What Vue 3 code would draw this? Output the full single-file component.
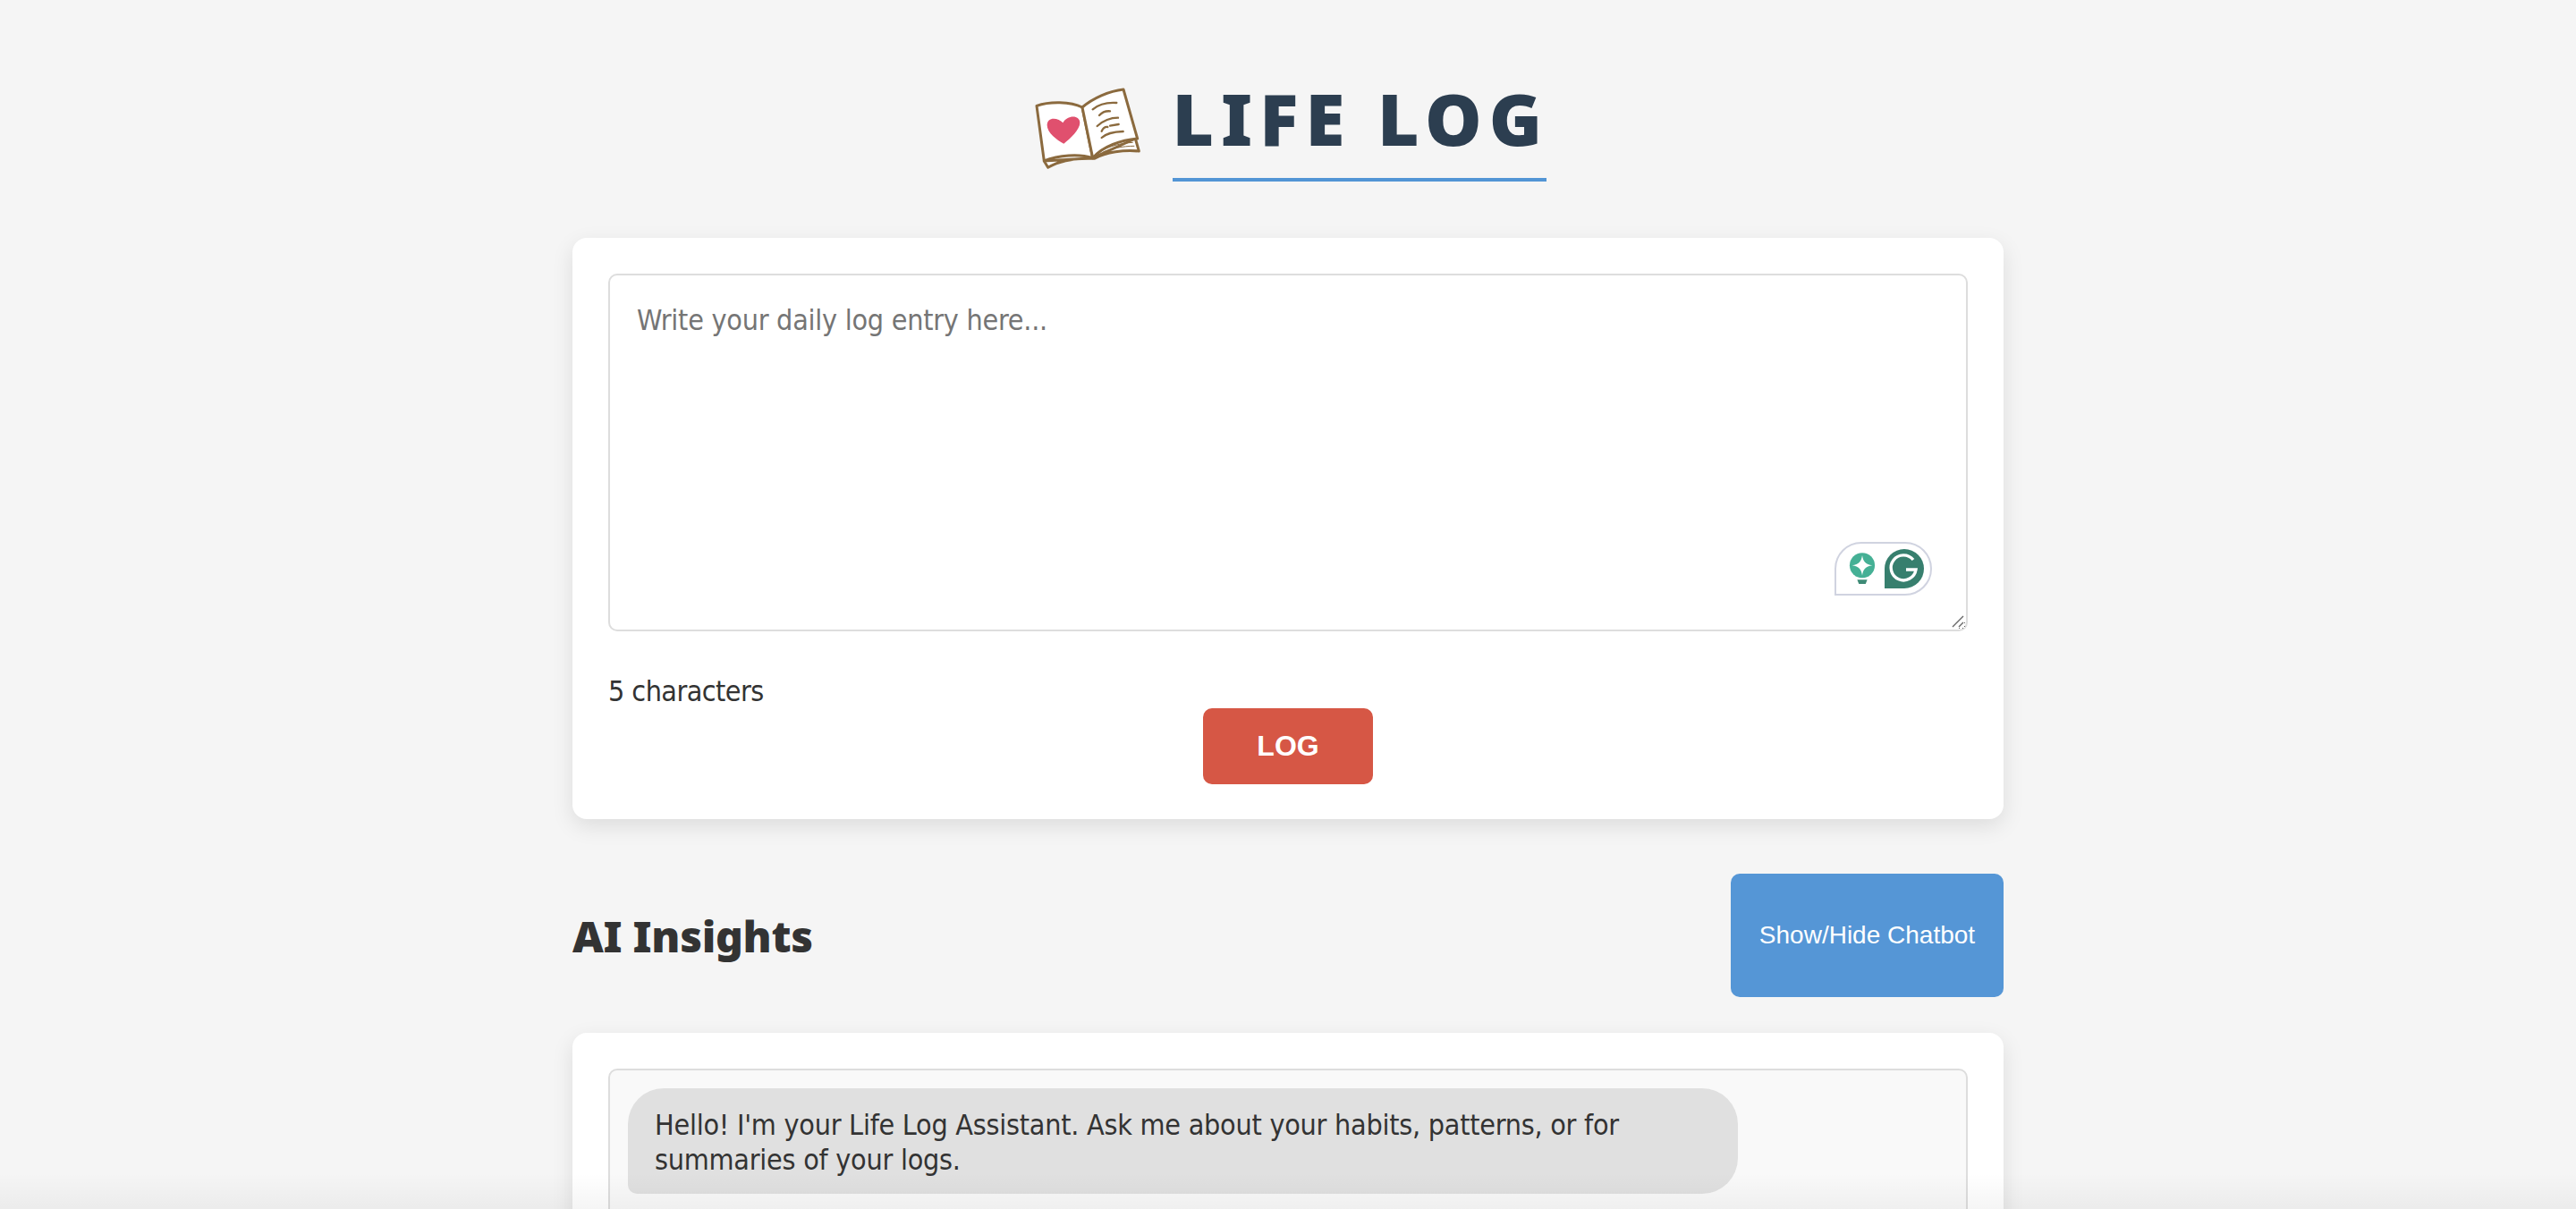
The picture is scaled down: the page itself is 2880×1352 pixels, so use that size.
<script setup>
const placeholder = 'Write your daily log entry here...'
</script>

<template>
  <div class="page">
    <header class="head">
      <svg class="book" viewBox="0 0 540 360" aria-hidden="true">
        <path class="pg" d="M112 300 L125 322 C170 295 230 290 280 292 C320 270 380 262 430 267 L418 225 L275 290 Z"/>
        <path class="thin" d="M300 268 C330 250 370 240 410 238 M310 270 C340 258 375 250 415 250"/>
        <path class="pg" d="M87 115 C130 100 200 100 240 120 L275 290 C230 275 160 280 112 300 Z"/>
        <path class="pg" d="M240 120 C275 90 330 65 378 60 L425 225 C370 230 310 250 275 290 Z"/>
        <path class="ln" d="M275 127 C295 110 325 103 355 105 M297 147 C305 138 320 132 333 133 M290 183 C310 165 335 155 360 155 M305 200 C310 190 318 185 325 186 M333 182 L362 177 M305 222 C320 208 345 202 377 201"/>
        <path class="heart" d="M175 172 C160 155 122 150 122 180 C122 205 155 230 178 242 C200 225 232 195 232 172 C232 145 190 145 175 172 Z"/>
      </svg>
      <h1 class="title">LIFE LOG</h1>
    </header>

    <main class="wrap">
      <section class="card entry">
        <div class="field">
          <textarea class="input" :placeholder="placeholder"></textarea>
          <div class="gram">
            <svg class="bulb" viewBox="0 0 32 38" aria-hidden="true">
              <circle cx="16" cy="15" r="15" fill="#45b095"/>
              <path d="M8 24 L24 24 L24 28 L8 28 Z" fill="#45b095"/>
              <path d="M10 32 L22 32 L20 37 L12 37 Z" fill="#3d8a76"/>
              <path d="M16 3 C17 10 20 14 28 15 C20 16 17 20 16 27 C15 20 12 16 4 15 C12 14 15 10 16 3 Z" fill="#fff"/>
            </svg>
            <svg class="g" viewBox="0 0 44 44" aria-hidden="true">
              <path d="M22 0 A22 22 0 0 1 22 44 L0 44 L0 22 A22 22 0 0 1 22 0 Z" fill="#377f6e"/>
              <path d="M32 12 A14 14 0 1 0 35 23 L24 23" fill="none" stroke="#fff" stroke-width="3.4"/>
            </svg>
          </div>
          <svg class="grip" viewBox="0 0 14 14" aria-hidden="true">
            <path d="M1 13 L13 1 M8 13 L13 8" stroke="#666" stroke-width="1.4" fill="none"/>
          </svg>
        </div>
        <div class="count">5 characters</div>
        <div class="actions"><button class="log" type="button">LOG</button></div>
      </section>

      <div class="bar">
        <h2 class="sub">AI Insights</h2>
        <button class="toggle" type="button">Show/Hide Chatbot</button>
      </div>

      <section class="card chat">
        <div class="messages">
          <div class="bubble">Hello! I'm your Life Log Assistant. Ask me about your habits, patterns, or for summaries of your logs.</div>
        </div>
      </section>
    </main>
    <div class="fade"></div>
  </div>
</template>

<style>
html, body { margin: 0; height: 100%; overflow: hidden; background: #f5f5f5; }
</style>

<style scoped>
.page {
  position: relative;
  height: 1352px;
  overflow: hidden;
  background: #f5f5f5;
  color: #333;
  font-family: "DejaVu Sans Condensed", "DejaVu Sans", sans-serif;
  font-stretch: condensed;
  font-size: 32px;
  letter-spacing: -0.25px;
}
.head {
  display: flex;
  justify-content: center;
  align-items: flex-start;
  gap: 24px;
  padding-top: 80px;
  height: 186px;
  box-sizing: border-box;
}
.book { width: 180px; height: 120px; margin: 0 -24px 0 -8px; position: relative; left: -1px; }
.pg { fill: #fff; stroke: #8b6a3e; stroke-width: 9; stroke-linejoin: round; }
.thin { fill: none; stroke: #8b6a3e; stroke-width: 3; }
.ln { fill: none; stroke: #8b6a3e; stroke-width: 7; stroke-linecap: round; }
.heart { fill: #e0506e; }
.title {
  margin: 0 13px 0 0;
  box-sizing: border-box;
  width: 418px;
  height: 123px;
  border-bottom: 4px solid #5295d5;
  color: #2c3e50;
  font-family: "Noto Sans", sans-serif;
  font-stretch: normal;
  font-size: 80px;
  font-weight: 900;
  line-height: 104px;
  letter-spacing: 8px;
  white-space: nowrap;
}
.wrap { width: 1600px; margin: 0 auto; padding-top: 80px; }
.card {
  box-sizing: border-box;
  background: #fff;
  border-radius: 16px;
  padding: 40px;
  box-shadow: 0 8px 24px rgba(0, 0, 0, 0.1);
}
.entry { height: 650px; }
.field { position: relative; height: 400px; }
.input {
  display: block;
  box-sizing: border-box;
  width: 100%;
  height: 400px;
  padding: 30px;
  border: 2px solid #ddd;
  border-radius: 10px;
  outline: none;
  font: inherit;
  font-stretch: condensed;
  letter-spacing: -0.25px;
  line-height: 40px;
  color: #333;
  background: #fff;
}
.input::placeholder { color: #757575; opacity: 1; }
.gram {
  position: absolute;
  left: 1371px;
  top: 300px;
  box-sizing: border-box;
  width: 109px;
  height: 60px;
  display: flex;
  align-items: center;
  gap: 10px;
  padding: 0 6px 0 14px;
  background: #fff;
  border: 2px solid #d0d3e0;
  border-radius: 30px 30px 30px 0;
}
.bulb { width: 30px; height: 36px; }
.g { width: 44px; height: 44px; }
.grip { position: absolute; right: 4px; bottom: 4px; width: 14px; height: 14px; background: #fff; }
.count { margin-top: 47px; height: 39px; line-height: 40px; letter-spacing: -0.55px; }
.actions { display: flex; justify-content: center; }
.log {
  width: 190px;
  height: 85px;
  border: 0;
  border-radius: 10px;
  background: #d65745;
  color: #fff;
  font-family: "Liberation Sans", Arial, sans-serif;
  font-size: 32px;
  font-weight: 700;
}
.bar {
  display: flex;
  justify-content: space-between;
  align-items: center;
  margin: 61px 0 40px;
}
.sub {
  margin: 0;
  font-family: "Noto Sans", sans-serif;
  font-stretch: normal;
  font-size: 48px;
  font-weight: 900;
  letter-spacing: -0.3px;
  color: #333;
}
.toggle {
  width: 305px;
  height: 138px;
  border: 0;
  border-radius: 10px;
  background: #5596d6;
  color: #fff;
  font-family: "Liberation Sans", Arial, sans-serif;
  font-size: 28px;
}
.messages {
  box-sizing: border-box;
  height: 600px;
  padding: 20px;
  background: #f9f9f9;
  border: 2px solid #ddd;
  border-radius: 10px;
}
.bubble {
  box-sizing: border-box;
  width: 1241px;
  height: 118px;
  padding: 22px 30px 0;
  background: #e0e0e0;
  border-radius: 40px 40px 40px 10px;
  line-height: 39px;
  color: #333;
}
.fade {
  position: absolute;
  left: 0;
  right: 0;
  bottom: 0;
  height: 40px;
  background: linear-gradient(to bottom, rgba(0,0,0,0), rgba(0,0,0,0.04));
  pointer-events: none;
}
</style>
